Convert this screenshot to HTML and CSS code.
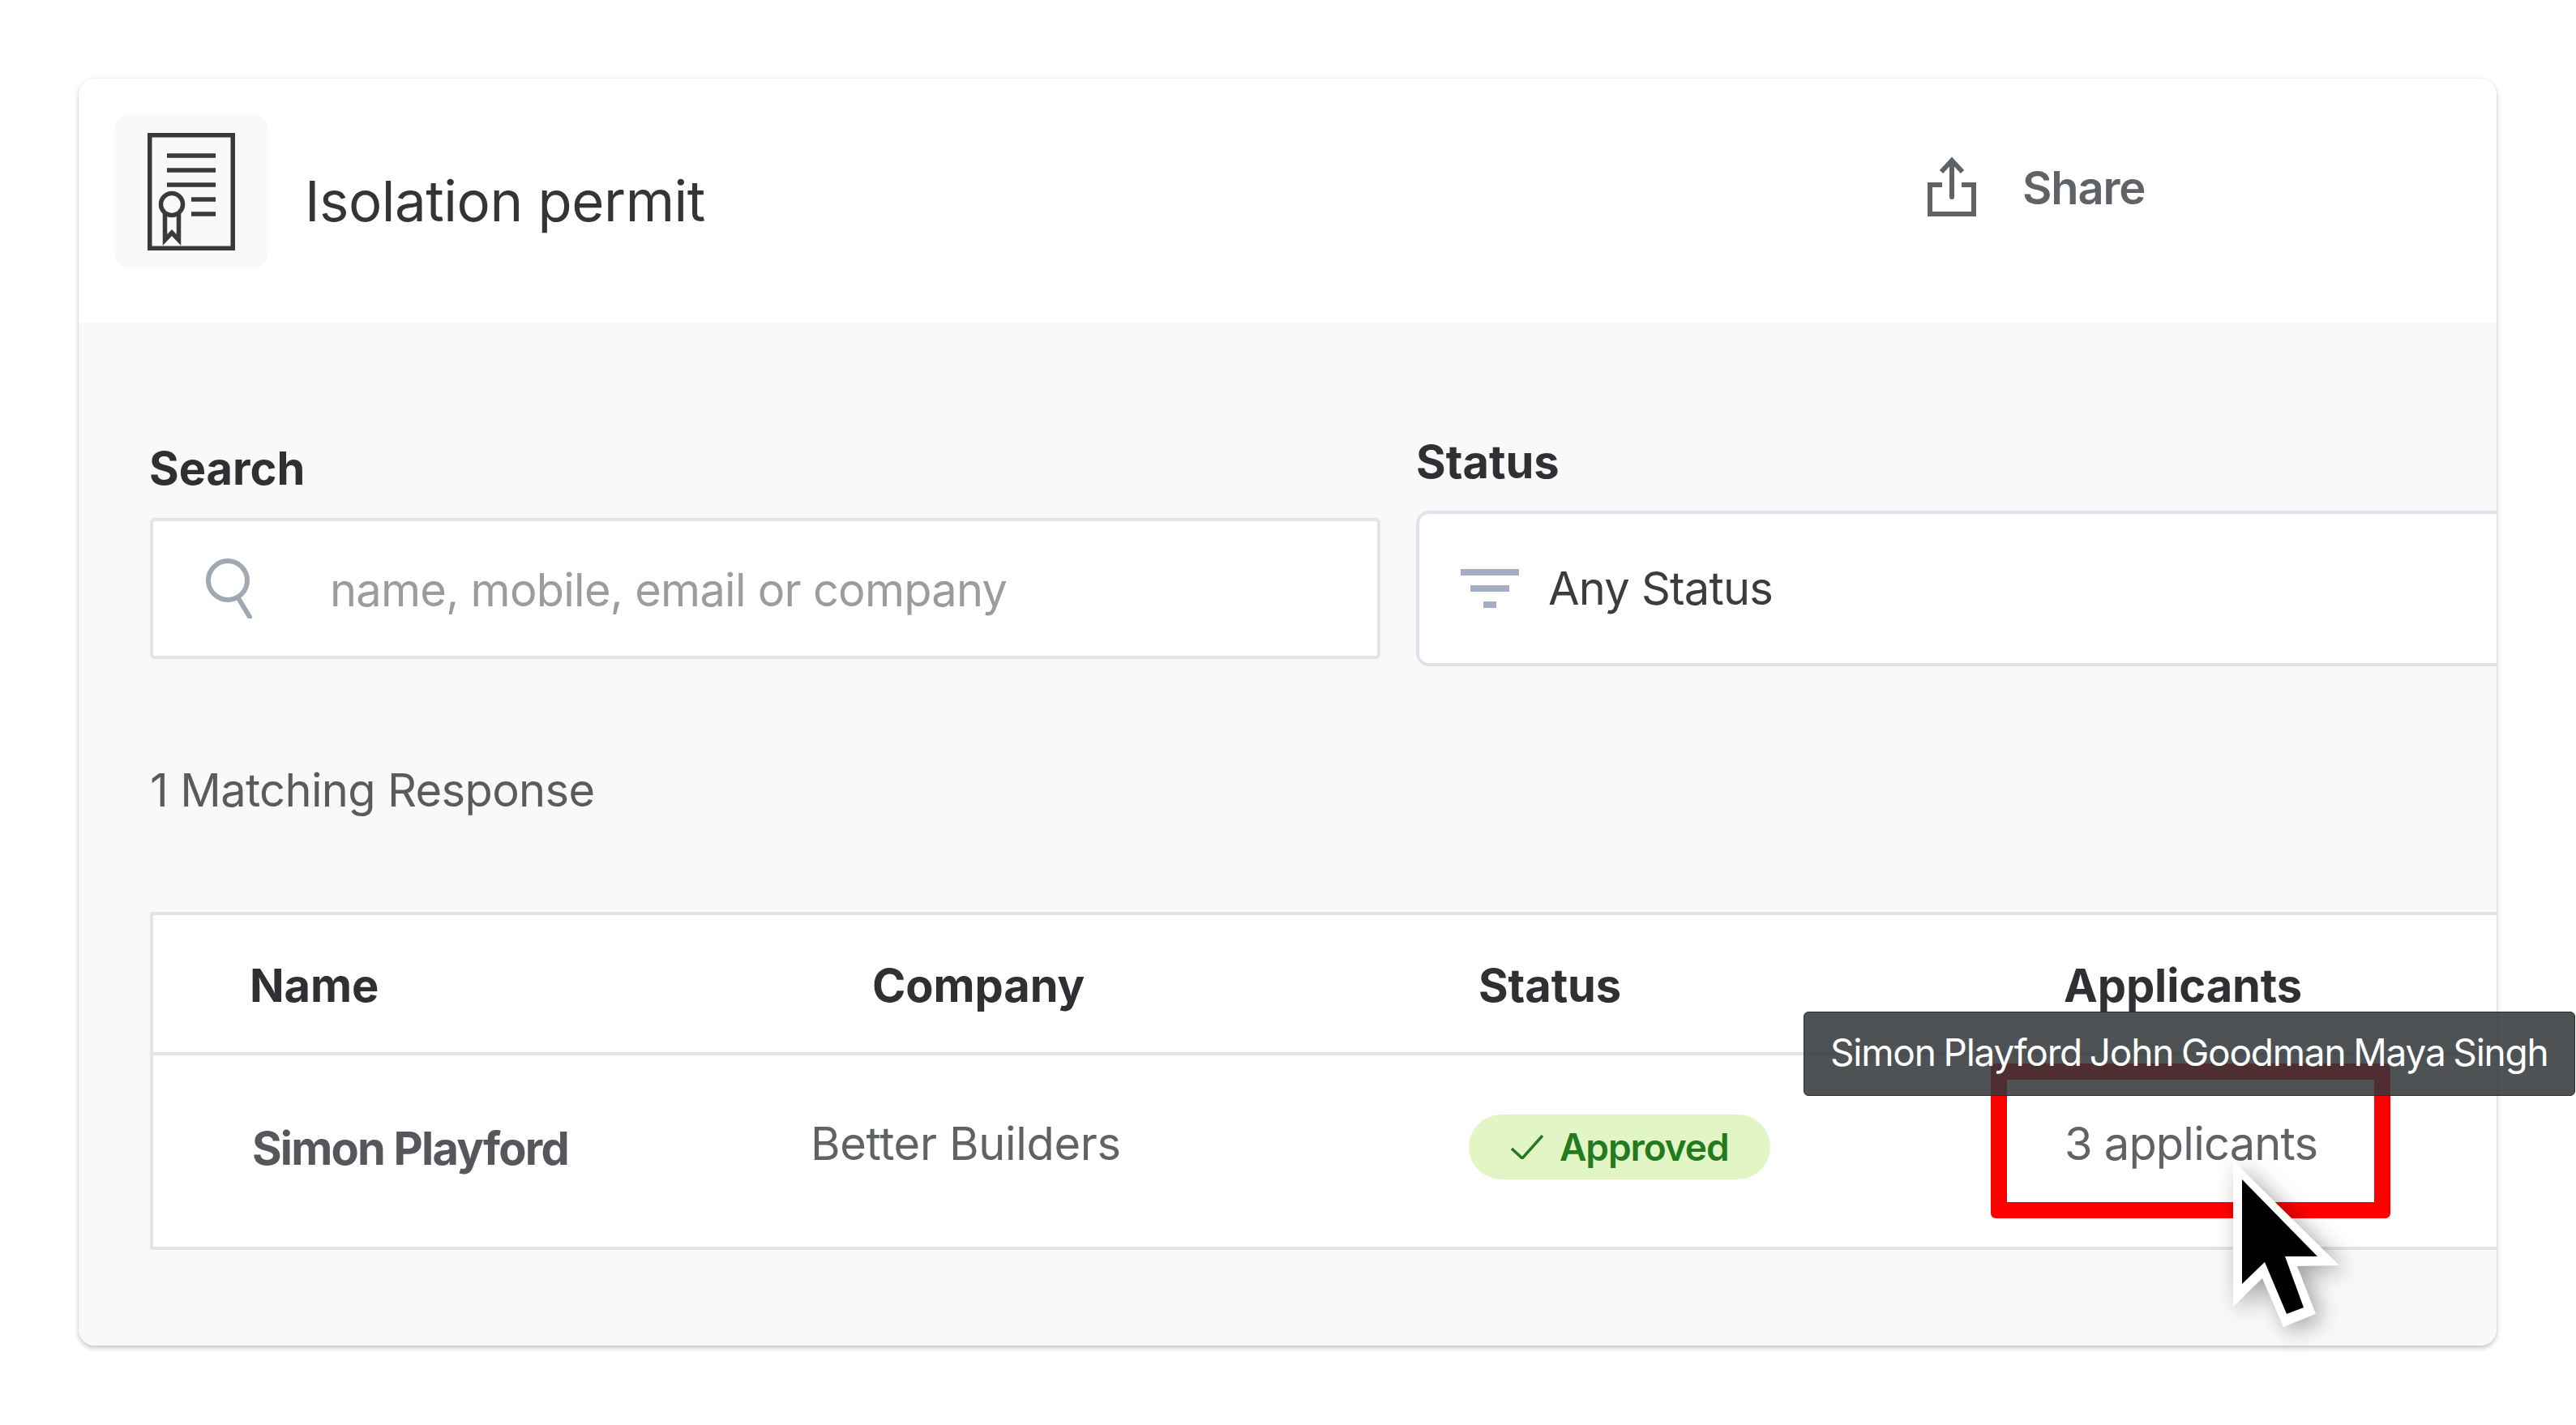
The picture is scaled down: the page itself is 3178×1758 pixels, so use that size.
FILE: index.html
```html
<!DOCTYPE html>
<html lang="en">
<head>
<meta charset="utf-8">
<title>Isolation permit</title>
<link rel="stylesheet" href="styles.css">
</head>
<body>
<div class="page">
  <div class="card">
    <header class="head">
      <div class="doc-tile">
        <svg class="doc-icon" viewBox="0 0 108 145" fill="none" stroke="#3a3a3c" stroke-width="5.500">
          <rect x="2.750" y="2.750" width="102.500" height="139.500"/>
          <path d="M24 28h60M24 46h60M24 64h60M54 82h30M54 100h30"/>
          <circle cx="30" cy="88" r="13.500"/>
          <path d="M21.500 100v32l8.500-9 8.500 9v-32"/>
        </svg>
      </div>
      <h1 class="title">Isolation permit</h1>
      <div class="share">
        <svg class="share-icon" viewBox="0 0 60 73" fill="none" stroke="#5f6266" stroke-width="6">
          <path d="M18 34H3v36h54V34H42"/>
          <path d="M30 49V5" stroke-linecap="round"/>
          <path d="M17 18 30 4l13 14"/>
        </svg>
        <span class="share-text">Share</span>
      </div>
    </header>
    <main class="body">
      <div class="filters">
        <div class="field field-search">
          <label class="label">Search</label>
          <div class="search-box">
            <svg class="search-icon" viewBox="0 0 57 74" fill="none" stroke="#a0a8b4" stroke-width="6">
              <ellipse cx="27" cy="27" rx="24" ry="24"/>
              <path d="M40 49 54 72" stroke-linecap="round"/>
            </svg>
            <span class="placeholder">name, mobile, email or company</span>
          </div>
        </div>
        <div class="field">
          <label class="label">Status</label>
          <div class="select-box">
            <div class="filter-icon">
              <span class="bar bar-l"></span>
              <span class="bar bar-m"></span>
              <span class="bar bar-s"></span>
            </div>
            <span class="select-text">Any Status</span>
          </div>
        </div>
      </div>
      <p class="count">1 Matching Response</p>
      <div class="table">
        <div class="thead">
          <span>Name</span>
          <span>Company</span>
          <span>Status</span>
          <span>Applicants</span>
        </div>
        <div class="trow">
          <span class="cell-name">Simon Playford</span>
          <span class="cell cell-company">Better Builders</span>
          <span class="pill">
            <svg class="check" viewBox="0 0 40 30" fill="none" stroke="#237a1f" stroke-width="3.500"><path d="M1 17l13 12L39 1"/></svg>
            <span>Approved</span>
          </span>
          <span class="cell cell-count">3 applicants</span>
        </div>
      </div>
    </main>
  </div>
  <div class="highlight"></div>
  <div class="tooltip">Simon Playford John Goodman Maya Singh</div>
  <svg class="cursor" viewBox="0 0 150 220">
    <path d="M5 5 136 134 84 135 107 194 67 210 41 150 5 185Z" fill="#fff"/>
    <path d="M16 28 109 123 69 123 92 186 71 194 44 130 16 157Z" fill="#000"/>
  </svg>
</div>
</body>
</html>
```
FILE: styles.css
```css
* { box-sizing: border-box; }
html, body { margin: 0; padding: 0; background: #fff; }
body { width: 3178px; height: 1758px; overflow: hidden; font-family: Inter, "Liberation Sans", sans-serif; }
.page { position: relative; width: 3178px; height: 1758px; padding: 97px 98px 98px 97px; }

.card { width: 2983px; height: 1563px; border-radius: 20px; background: #fff; box-shadow: 0 3px 6px rgba(0,0,0,.22), 0 0 3px rgba(0,0,0,.08); display: flex; flex-direction: column; overflow: hidden; }

.head { height: 301px; flex: none; background: #fff; display: flex; align-items: flex-start; padding: 43px 0 0 43px; }
.doc-tile { width: 192px; height: 192px; border-radius: 22px; background: #f8f9fb; display: flex; align-items: center; justify-content: center; }
.doc-icon { width: 108px; height: 145px; display: block; margin-top: 1px; }
.title { margin: 66px 0 0 44px; font-size: 69px; line-height: 84px; font-weight: 400; color: #333438; letter-spacing: -0.5px; }
.share { margin-left: 1508px; margin-top: 54px; display: flex; align-items: flex-start; }
.share-icon { width: 60px; height: 73px; display: block; }
.share-text { margin: 4px 0 0 57px; font-size: 56px; line-height: 68px; font-weight: 600; color: #5f6266; letter-spacing: -1.1px; }

.body { flex: 1; background: #f9f9f9; padding: 138px 0 0 88px; overflow: hidden; }
.filters { display: flex; gap: 44px; width: 3000px; }
.field { flex: 1; }
.field-search { flex: none; width: 1518px; margin-top: 8px; }
.label { display: block; font-size: 56px; line-height: 68px; font-weight: 700; color: #2f3034; margin-bottom: 26px; letter-spacing: 0; }
.field-search .label { margin-bottom: 27px; margin-left: -1px; }
.search-box { height: 174px; background: #fff; border: 4px solid #e3e4e8; border-radius: 6px; display: flex; align-items: center; padding-left: 65px; }
.search-icon { width: 57px; height: 74px; display: block; }
.placeholder { margin: 4px 0 0 96px; font-size: 56px; line-height: 68px; color: #9b9c9f; letter-spacing: -0.75px; }
.select-box { height: 192px; background: #fff; border: 4px solid #dfe3ee; border-radius: 16px; display: flex; align-items: center; padding-left: 51px; }
.filter-icon { width: 72px; display: flex; flex-direction: column; align-items: center; gap: 12px; }
.bar { display: block; height: 8px; background: #a3aec4; }
.bar-l { width: 72px; }
.bar-m { width: 48px; }
.bar-s { width: 16px; }
.select-text { margin-left: 36px; font-size: 56px; line-height: 68px; color: #3c3c3e; letter-spacing: -0.8px; }

.count { margin: 119px 0 116px; font-size: 56px; line-height: 68px; color: #595b5f; letter-spacing: -0.65px; }

.table { width: 3000px; height: 417px; background: #fff; border: 4px solid #e3e4e8; border-radius: 2px; }
.thead { height: 173px; border-bottom: 4px solid #e3e4e8; padding: 53px 0 0 119px; display: grid; grid-template-columns: 768px 748px 722px 1fr; font-size: 56px; line-height: 68px; font-weight: 700; color: #2f3034; letter-spacing: -0.1px; }
.trow { padding: 73px 0 0 122px; display: grid; grid-template-columns: 689px 812px 737px 1fr; align-items: start; }
.cell { font-size: 56px; line-height: 68px; color: #5f6266; margin-top: 2px; }
.cell-company { letter-spacing: -0.35px; margin-left: 0; }
.cell-count { letter-spacing: -0.8px; margin-left: -2px; }
.cell-name { font-size: 56px; line-height: 68px; font-weight: 700; color: #55575c; margin-top: 8px; letter-spacing: -1.8px; margin-left: 0; }
.pill { width: 372px; height: 80px; border-radius: 40px; background: #e1f6c4; display: flex; align-items: center; padding-left: 52px; font-size: 46px; font-weight: 600; color: #237a1f; letter-spacing: -1.1px; }
.check { width: 40px; height: 30px; display: block; margin-right: 20px; }

.highlight { position: absolute; left: 2456px; top: 1312px; width: 493px; height: 191px; border: 20px solid #f00; border-radius: 6px; }
.tooltip { position: absolute; left: 2225px; top: 1248px; width: 952px; height: 104px; background: rgba(49,53,56,.86); border: 1px solid #2a2c2e; border-radius: 6px; color: #fff; font-size: 46px; line-height: 58px; padding: 20px 0 0 32px; white-space: nowrap; letter-spacing: -1.2px; word-spacing: -2px; }
.cursor { position: absolute; left: 2750px; top: 1427px; width: 150px; height: 220px; filter: drop-shadow(8px 6px 14px rgba(0,0,0,.35)); }
```
